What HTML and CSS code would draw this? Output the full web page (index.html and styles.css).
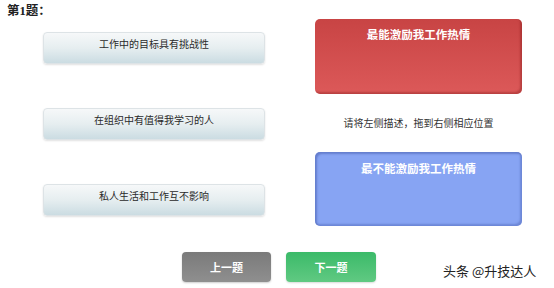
FILE: index.html
```html
<!DOCTYPE html>
<html lang="zh">
<head>
<meta charset="utf-8">
<link rel="stylesheet" href="styles.css">
</head>
<body>
<div class="page">
  <div class="title">第1题<span class="colon">：</span></div>
  <div class="main">
    <div class="options">
      <div class="option">工作中的目标具有挑战性</div>
      <div class="option">在组织中有值得我学习的人</div>
      <div class="option">私人生活和工作互不影响</div>
    </div>
    <div class="targets">
      <div class="target red">最能激励我工作热情</div>
      <div class="hint">请将左侧描述，拖到右侧相应位置</div>
      <div class="target blue">最不能激励我工作热情</div>
    </div>
  </div>
  <div class="footer">
    <div class="btn prev">上一题</div>
    <div class="btn next">下一题</div>
    <div class="mark">头条 @升技达人</div>
  </div>
</div>
</body>
</html>
```
FILE: styles.css
```css
html, body {
  margin: 0;
  padding: 0;
  background: #ffffff;
}
body {
  width: 554px;
  height: 288px;
  overflow: hidden;
  font-family: "Noto Sans CJK SC", "Noto Sans", sans-serif;
  color: #333;
}
.page {
  display: flex;
  flex-direction: column;
}
.title {
  height: 19px;
  padding-left: 7px;
  font-family: "Liberation Serif", "Noto Sans CJK SC", serif;
  font-weight: bold;
  font-size: 12.5px;
  line-height: 19px;
  color: #222;
}
.colon {
  font-family: "Noto Sans CJK SC", sans-serif;
}
.main {
  display: flex;
}
.options {
  display: flex;
  flex-direction: column;
  gap: 44px;
  margin-left: 43px;
  padding-top: 13px;
  width: 222px;
}
.option {
  box-sizing: border-box;
  height: 32px;
  border: 1px solid #dde3e6;
  border-radius: 4px;
  background: linear-gradient(#f6f8f9, #e6eef0 50%, #cbdce2);
  box-shadow: 0 1px 2px rgba(0,0,0,0.12);
  font-size: 10px;
  line-height: 22px;
  text-align: center;
  color: #2a2a2a;
}
.targets {
  margin-left: 50px;
  width: 207px;
  display: flex;
  flex-direction: column;
}
.target {
  box-sizing: border-box;
  border-radius: 5px;
  color: #fff;
  font-weight: bold;
  font-size: 11.5px;
  text-align: center;
  padding-top: 8px;
  line-height: 15px;
}
.red {
  height: 75px;
  background: linear-gradient(#c84444, #dc5959);
  box-shadow: inset -2px -2px 2px rgba(120,20,20,0.35);
}
.blue {
  height: 74px;
  background: #87a4f3;
  box-shadow: inset 2px 2px 2px rgba(60,80,160,0.45), inset -2px -2px 2px rgba(60,80,160,0.35);
  padding-top: 9px;
}
.hint {
  height: 58px;
  font-size: 10px;
  line-height: 58px;
  text-align: center;
  color: #333;
}
.footer {
  display: flex;
  align-items: center;
  margin-top: 26px;
  padding-left: 182px;
  gap: 15px;
}
.btn {
  width: 89px;
  height: 30px;
  border-radius: 4px;
  color: #fff;
  font-weight: bold;
  font-size: 11px;
  line-height: 30px;
  text-align: center;
}
.prev {
  background: linear-gradient(#7a7a7a, #8f8f8f);
  box-shadow: 0 1px 2px rgba(0,0,0,0.2);
}
.next {
  width: 90px;
  background: linear-gradient(#3bba69, #60c982);
  box-shadow: 0 1px 2px rgba(0,0,0,0.15);
}
.mark {
  margin-left: 52px;
  margin-top: 6px;
  font-size: 13px;
  color: #222;
  white-space: nowrap;
}
```
